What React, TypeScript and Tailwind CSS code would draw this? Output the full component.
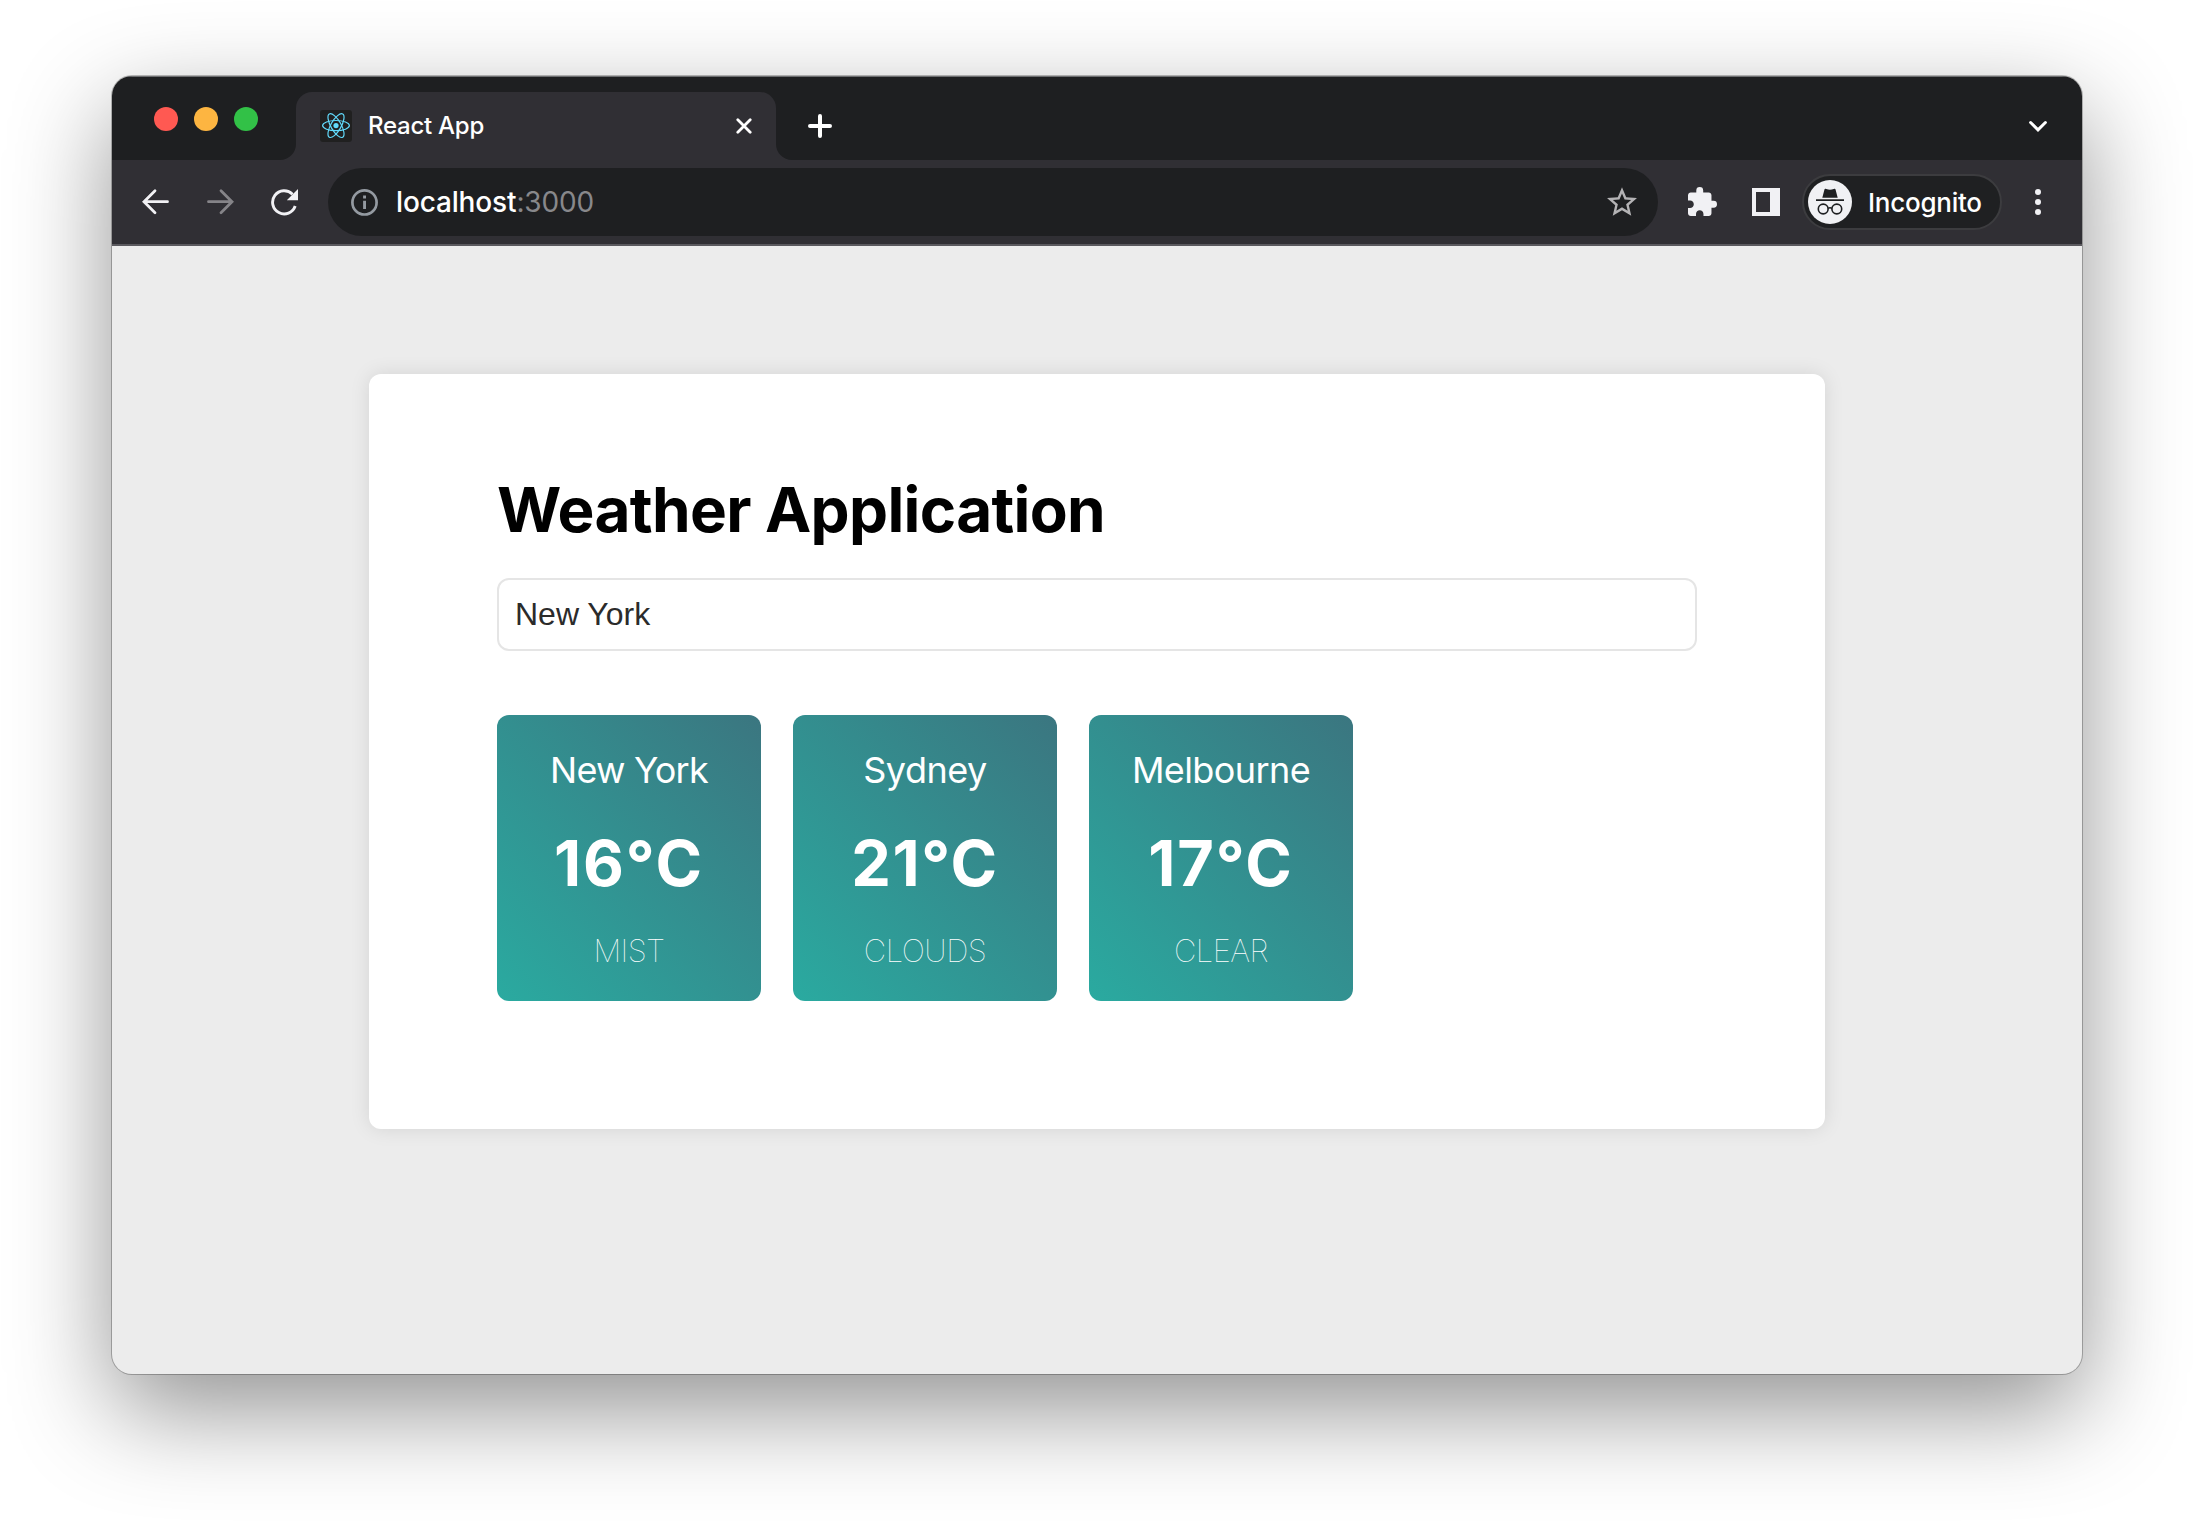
import type { ReactNode } from "react";

type Weather = { city: string; temp: string; sky: string; cityW: string; tempW: string; skyW: string };

const weather: Weather[] = [
  { city: "New York", temp: "16°C", sky: "Mist", cityW: "tracking-[-0.8px]", tempW: "tracking-[1.9px]", skyW: "tracking-[-0.6px]" },
  { city: "Sydney", temp: "21°C", sky: "Clouds", cityW: "tracking-[-0.5px]", tempW: "tracking-[1.5px]", skyW: "tracking-[-0.5px]" },
  { city: "Melbourne", temp: "17°C", sky: "Clear", cityW: "tracking-[-0.6px]", tempW: "tracking-[1.8px]", skyW: "tracking-[-0.6px]" },
];

function ReactLogo() {
  return (
    <svg viewBox="0 0 32 32" className="size-8 shrink-0" fill="none" stroke="#61dafb" strokeWidth="1.2">
      <rect width="32" height="32" rx="3" fill="#202020" stroke="none" />
      <circle cx="16" cy="15.6" r="2.6" fill="#61dafb" stroke="none" />
      <ellipse cx="16" cy="15.6" rx="13.4" ry="5.1" />
      <ellipse cx="16" cy="15.6" rx="13.4" ry="5.1" transform="rotate(60 16 15.6)" />
      <ellipse cx="16" cy="15.6" rx="13.4" ry="5.1" transform="rotate(120 16 15.6)" />
    </svg>
  );
}

function Stroke({ className, box, children }: { className: string; box: string; children: ReactNode }) {
  return (
    <svg viewBox={box} className={className} fill="none" stroke="currentColor" strokeLinecap="round" strokeWidth="3">
      {children}
    </svg>
  );
}

function TabStrip() {
  return (
    <div className="flex h-[84px] shrink-0 items-end bg-[#1e1f21] shadow-[inset_0_1px_0_#6d6e70]">
      <div className="mb-[29px] ml-[42px] flex gap-4">
        <span className="size-6 rounded-full bg-[#ff5952]" />
        <span className="size-6 rounded-full bg-[#fdb541]" />
        <span className="size-6 rounded-full bg-[#32c147]" />
      </div>
      <svg viewBox="0 0 16 16" className="ml-[22px] size-4 shrink-0">
        <path d="M16 0v16H0A16 16 0 0 0 16 0z" fill="#302f34" />
      </svg>
      <div className="flex h-[68px] w-[480px] items-center rounded-t-2xl bg-[#302f34] pr-6 pl-6 text-white">
        <ReactLogo />
        <span className="ml-4 flex-1 text-[24px] leading-8 font-medium tracking-[-0.25px]">React App</span>
        <Stroke box="0 0 16 16" className="size-4">
          <path d="M1.8 1.8l12.4 12.4M14.2 1.8L1.8 14.2" strokeWidth="2.8" />
        </Stroke>
      </div>
      <svg viewBox="0 0 16 16" className="size-4 shrink-0">
        <path d="M0 0v16h16A16 16 0 0 1 0 0z" fill="#302f34" />
      </svg>
      <Stroke box="0 0 24 24" className="mb-[22px] ml-4 size-6 text-white">
        <path d="M12 2v20M2 12h20" strokeWidth="4" />
      </Stroke>
      <Stroke box="0 0 18 12" className="mr-[35px] mb-7 ml-auto h-3 w-[18px] text-white">
        <path d="M1.6 2.500L9 9.900l7.400-7.400" />
      </Stroke>
    </div>
  );
}

function Toolbar() {
  return (
    <div className="flex h-[86px] shrink-0 items-center border-b-2 border-[#5a595e] bg-[#302f34] pl-[30px] text-[#f1f1f4]">
      <Stroke box="0 0 28 28" className="size-7">
        <path d="M25.5 13.7H2.5M13 2.7L2 13.7l11 11" strokeWidth="2.8" />
      </Stroke>
      <Stroke box="0 0 28 28" className="ml-9 size-7 text-[#858488]">
        <path d="M2.5 13.7h23M15 2.7l11 11-11 11" strokeWidth="2.8" />
      </Stroke>
      <svg viewBox="0 0 28 28" className="ml-9 size-7" fill="none" stroke="currentColor" strokeWidth="2.9">
        <path d="M22.5 6.2A11.6 11.6 0 1 0 25.2 18" />
        <path d="M28 1v11.2H16.8z" fill="currentColor" stroke="none" />
      </svg>

      <div className="ml-[30px] flex h-[68px] w-[1330px] items-center rounded-full bg-[#1e1f21] pr-[21px] pl-[22px]">
        <svg viewBox="0 0 28 28" className="size-7" fill="#949aa1">
          <circle cx="14.5" cy="14.4" r="12.1" fill="none" stroke="#949aa1" strokeWidth="2.7" />
          <path d="M13.1 7.6H16v2.9h-2.900zM13.1 12.8H16V21h-2.900z" />
        </svg>
        <div className="ml-[18px] flex-1 text-[28px] leading-9 tracking-[-0.15px] whitespace-nowrap">
          <span className="font-medium text-white">localhost</span>
          <span className="text-[#88888b]">:3000</span>
        </div>
        <svg viewBox="2 2 20 19" className="mt-[-1px] h-[29px] w-[30px]" fill="#b4b3b5">
          <path d="M22 9.24l-7.19-.62L12 2 9.19 8.63 2 9.24l5.46 4.73L5.82 21 12 17.27 18.18 21l-1.63-7.03L22 9.24zM12 15.4l-3.76 2.27 1-4.28-3.32-2.88 4.38-.38L12 6.1l1.71 4.04 4.38.38-3.32 2.88 1 4.28L12 15.4z" />
        </svg>
      </div>

      <svg viewBox="2 1 21 21" className="mt-[-1px] ml-[30px] size-[29px]" fill="currentColor">
        <path d="M20.5 11H19V7c0-1.1-.9-2-2-2h-4V3.500a2.500 2.500 0 0 0-5 0V5H4c-1.100 0-1.990.9-1.990 2v3.800H3.500c1.490 0 2.700 1.210 2.700 2.700s-1.210 2.700-2.700 2.700H2V20c0 1.100.9 2 2 2h3.800v-1.500c0-1.490 1.210-2.700 2.700-2.700s2.700 1.210 2.700 2.700V22H17c1.100 0 2-.9 2-2v-4h1.500a2.500 2.500 0 0 0 0-5z" />
      </svg>
      <svg viewBox="0 0 28 28" className="ml-[35px] size-7" fill="currentColor" fillRule="evenodd">
        <path d="M0 0h28v28H0zM4 4v20h14V4z" />
      </svg>

      <div className="ml-[22px] flex h-[56px] w-[200px] items-center rounded-full border-2 border-[#3c3c3f] bg-[#1f2022] pl-1">
        <svg viewBox="0 0 44 44" className="size-11 shrink-0">
          <circle cx="22" cy="22" r="22" fill="#f1f1f4" />
          <path d="M17.300 8.700q.5-.2 1 .2Q22 10.500 25.700 8.900q.5-.4 1-.2.700.2.900 1L29.700 17.800H14.300l2.100-8.100q.2-.8.900-1z" fill="#1f2022" />
          <path d="M8 20.200h28" stroke="#1f2022" strokeWidth="1.700" />
          <g fill="none" stroke="#1f2022" strokeWidth="1.600">
            <circle cx="15.200" cy="29" r="4.900" />
            <circle cx="28.800" cy="29" r="4.900" />
            <path d="M20 28.400q2-1.200 4 0" />
          </g>
        </svg>
        <span className="mt-0.5 ml-4 text-[26px] leading-9 font-medium tracking-[-0.25px] text-white">Incognito</span>
      </div>

      <div className="ml-[33px] flex flex-col gap-1">
        <i className="size-1.5 rounded-full bg-current" />
        <i className="size-1.5 rounded-full bg-current" />
        <i className="size-1.5 rounded-full bg-current" />
      </div>
    </div>
  );
}

function WeatherCard({ city, temp, sky, cityW, tempW, skyW }: Weather) {
  return (
    <article className="flex h-[286px] w-[264px] flex-col items-center rounded-xl bg-[linear-gradient(45deg,#2aaaa0,#3b7680)] pt-8 whitespace-nowrap text-white">
      <h2 className={`text-[36px] leading-[46px] font-normal ${cityW}`}>{city}</h2>
      <p className={`mt-[30px] text-[63px] leading-[80px] font-bold ${tempW}`}>{temp}</p>
      <p className={`mt-6 text-[31px] leading-[48px] font-thin uppercase ${skyW}`}>{sky}</p>
    </article>
  );
}

export default function App() {
  return (
    <div className="flex h-[1522px] w-[2194px] justify-center overflow-hidden bg-white pt-[76px] font-['Inter',sans-serif]">
      <div className="flex h-[1298px] w-[1970px] flex-col overflow-hidden rounded-[20px] bg-[#ececec] shadow-[0_0_0_1px_rgba(0,0,0,0.25),0_36px_100px_rgba(0,0,0,0.43)]">
        <TabStrip />
        <Toolbar />
        <main className="flex flex-1 items-start justify-center pt-32">
          <section className="h-[755px] w-[1456px] rounded-xl bg-white px-32 pt-[96px] shadow-[0_0_20px_rgba(0,0,0,0.1)]">
            <h1 className="text-[62px] leading-[80px] font-bold tracking-[-0.65px] text-black">Weather Application</h1>
            <input
              defaultValue="New York"
              className="mt-7 block h-[73px] w-[1200px] rounded-xl border-2 border-[#e5e5e5] bg-white px-4 font-['Liberation_Sans',sans-serif] text-[32px] text-[#2b2b2b] outline-none"
            />
            <div className="mt-16 flex gap-8">
              {weather.map((w) => (
                <WeatherCard key={w.city} {...w} />
              ))}
            </div>
          </section>
        </main>
      </div>
    </div>
  );
}
